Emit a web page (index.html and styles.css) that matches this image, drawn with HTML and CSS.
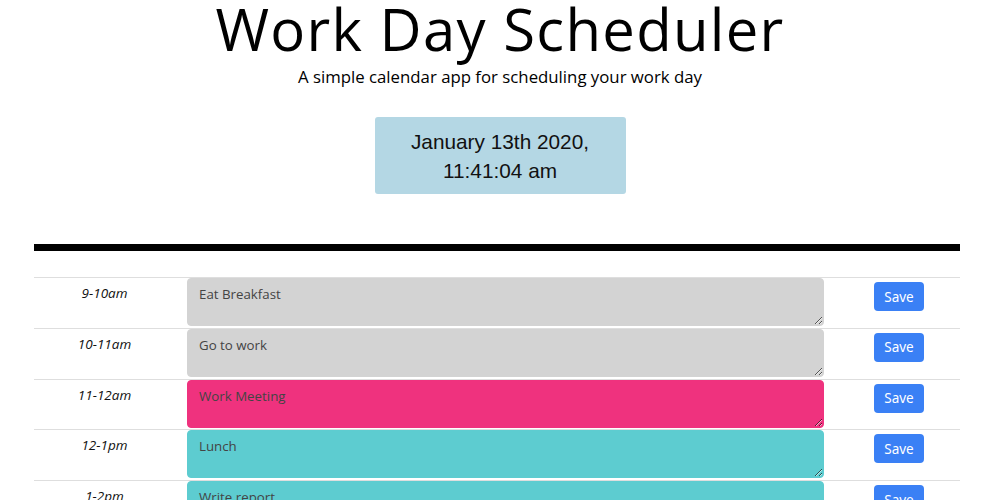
FILE: index.html
```html
<!DOCTYPE html>
<html>
<head>
<meta charset="utf-8">
<link rel="stylesheet" href="styles.css">
</head>
<body>
<header class="header">
  <h1 class="title">Work Day Scheduler</h1>
  <p class="lead">A simple calendar app for scheduling your work day</p>
  <div class="clock">January 13th 2020,<br>11:41:04 am</div>
</header>
<main class="container">
  <div class="divider"></div>
  <div class="rows">
    <div class="row">
      <div class="hour">9-10am</div>
      <textarea class="task past">Eat Breakfast</textarea>
      <div class="action"><button class="save">Save</button></div>
    </div>
    <div class="row">
      <div class="hour">10-11am</div>
      <textarea class="task past">Go to work</textarea>
      <div class="action"><button class="save">Save</button></div>
    </div>
    <div class="row">
      <div class="hour">11-12am</div>
      <textarea class="task present">Work Meeting</textarea>
      <div class="action"><button class="save">Save</button></div>
    </div>
    <div class="row">
      <div class="hour">12-1pm</div>
      <textarea class="task future">Lunch</textarea>
      <div class="action"><button class="save">Save</button></div>
    </div>
    <div class="row">
      <div class="hour">1-2pm</div>
      <textarea class="task future">Write report</textarea>
      <div class="action"><button class="save">Save</button></div>
    </div>
  </div>
</main>
</body>
</html>
```
FILE: styles.css
```css
html, body {
  margin: 0;
  padding: 0;
  background: #fff;
  font-family: "Open Sans", "Liberation Sans", sans-serif;
  color: #000;
}
.header {
  display: flex;
  flex-direction: column;
  align-items: center;
}
.title {
  margin: 0 0 6px;
  font-size: 58px;
  font-weight: 400;
  letter-spacing: 1.3px;
  line-height: 58px;
}
.lead {
  margin: 0;
  font-size: 16.8px;
  line-height: 26px;
}
.clock {
  margin-top: 27px;
  width: 251px;
  height: 77px;
  box-sizing: border-box;
  padding-top: 10px;
  background: #b4d7e4;
  border-radius: 3px;
  font-family: "Liberation Sans", Arial, sans-serif;
  font-size: 20.8px;
  line-height: 29px;
  text-align: center;
  color: #111;
}
.container {
  width: 926px;
  margin: 50px 0 0 34px;
}
.divider {
  height: 7px;
  background: #000;
}
.rows {
  margin-top: 26px;
}
.row {
  display: grid;
  grid-template-columns: 153px 637px 136px;
  height: 50.75px;
  border-top: 1px solid #dedede;
  box-sizing: border-box;
}
.hour {
  text-align: center;
  font-style: italic;
  font-size: 13.5px;
  line-height: 18px;
  padding: 6px 12px 0 0;
  color: #111;
}
.task {
  margin: 0;
  height: 48px;
  box-sizing: border-box;
  border: 1px solid #ddd;
  border-radius: 4px;
  padding: 6px 11px;
  font-family: "Open Sans", "Liberation Sans", sans-serif;
  font-size: 13.3px;
  line-height: 18px;
  color: #444;
  resize: vertical;
}
.past { background: #d3d3d3; border-color: #d3d3d3; }
.present { background: #ef327e; border-color: #ef327e; }
.future { background: #5dccd0; border-color: #5dccd0; }
.action {
  padding: 4px 0 0 50px;
}
.save {
  width: 50px;
  height: 29px;
  border: none;
  border-radius: 4px;
  background: #3a80f5;
  color: #fff;
  font-family: "Noto Sans", "Open Sans", sans-serif;
  font-size: 13.5px;
  padding: 0;
}
```
